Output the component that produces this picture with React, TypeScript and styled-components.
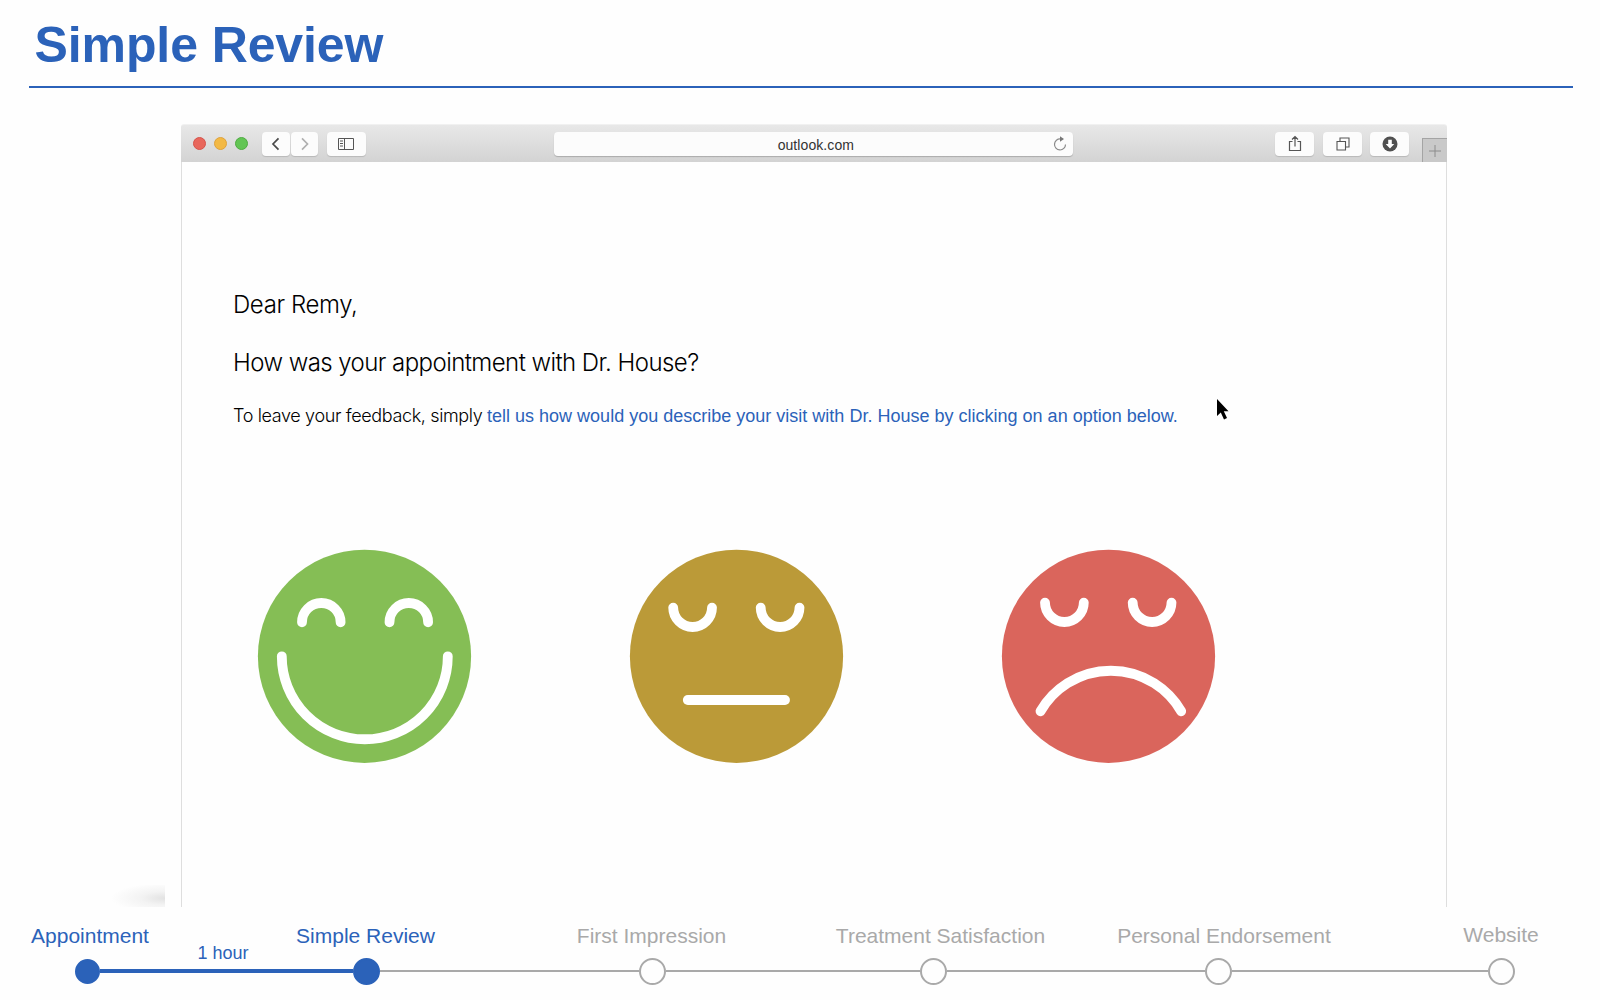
import React from 'react';
import styled, { createGlobalStyle } from 'styled-components';

const BLUE = '#2b62b9';
const GREY = '#a9a9a9';

const GlobalStyle = createGlobalStyle`
  *, *::before, *::after { box-sizing: border-box; }
  body {
    margin: 0;
    background: #fefefe;
    font-family: "Liberation Sans", Arial, sans-serif;
  }
  p, h1 { margin: 0; font-weight: normal; }
`;

const Slide = styled.main`
  width: 1600px;
  height: 1000px;
  display: flex;
  flex-direction: column;
  overflow: hidden;
`;

const Header = styled.header`
  height: 88px;
  margin: 0 27px 0 29px;
  padding: 16px 0 0 5.5px;
  border-bottom: 2px solid ${BLUE};
`;

const Title = styled.h1`
  && { font-weight: bold; }
  font-size: 50px;
  line-height: 58px;
  letter-spacing: -0.1px;
  color: ${BLUE};
`;

const Stage = styled.section`
  display: flex;
  height: 783px;
  margin-top: 36px;
`;

const Gutter = styled.div`
  width: 181px;
  display: flex;
  align-items: flex-end;
  padding-left: 109px;
`;

const Smudge = styled.div`
  width: 56px;
  height: 22px;
  background: radial-gradient(ellipse 54px 15px at 100% 60%, #e2e2e2, #f3f3f3 45%, #fefefe 100%);
`;

const Browser = styled.div`
  width: 1266px;
  display: flex;
  flex-direction: column;
`;

const Toolbar = styled.div`
  height: 38px;
  display: flex;
  align-items: flex-start;
  padding: 7px 0 0 12px;
  border-radius: 3px 3px 0 0;
  border-top: 1px solid #f1f1f1;
  background: linear-gradient(#e8e8e8, #d3d3d3);
`;

const Lights = styled.div`
  display: flex;
  gap: 8px;
  margin: 4.5px 15px 0 0;
`;

const Light = styled.span<{ $fill: string; $edge: string }>`
  width: 13px;
  height: 13px;
  border-radius: 50%;
  background: ${p => p.$fill};
  border: 1px solid ${p => p.$edge};
`;

const ToolButton = styled.button<{ $width: number; $gap?: number }>`
  width: ${p => p.$width}px;
  height: 24px;
  margin: 0 0 0 ${p => p.$gap ?? 0}px;
  padding: 0;
  display: flex;
  align-items: center;
  justify-content: center;
  border: 0;
  border-radius: 4px;
  background: #fcfcfc;
  box-shadow: 0 1px 1px rgba(0, 0, 0, 0.14);
`;

const AddressBar = styled.div`
  width: 519px;
  height: 24px;
  margin-left: 188px;
  display: flex;
  align-items: center;
  justify-content: flex-end;
  padding-right: 6px;
  border-radius: 4px;
  background: #fcfcfc;
  box-shadow: 0 1px 1px rgba(0, 0, 0, 0.2);
`;

const Address = styled.span`
  margin-right: 199px;
  padding-top: 2px;
  font-size: 14px;
  line-height: 22px;
  letter-spacing: 0.08px;
  color: #333;
`;

const NewTab = styled.div`
  width: 25px;
  height: 24px;
  margin: 6px 0 0 auto;
  display: flex;
  align-items: center;
  justify-content: center;
  border: solid #a4a4a4;
  border-width: 1px 0 0 1px;
  background: #c9c9c9;
`;

const Mail = styled.article`
  flex: 1;
  position: relative;
  padding: 128px 0 0 51px;
  border: solid #dedede;
  border-width: 0 1px;
`;

const Line = styled.p<{ $tracking: number }>`
  font-family: Inter, "Liberation Sans", sans-serif;
  font-weight: 300;
  font-size: 24px;
  line-height: 30px;
  margin-bottom: 28px;
  letter-spacing: ${p => p.$tracking}px;
  white-space: nowrap;
  color: #000;
`;

const Hint = styled.p`
  display: flex;
  align-items: baseline;
  margin-top: -1px;
  line-height: 22px;
  font-size: 18px;
  white-space: nowrap;
`;

const HintLead = styled.span`
  width: 254px;
  font-family: Inter, "Liberation Sans", sans-serif;
  font-weight: 300;
  letter-spacing: -0.36px;
`;

const HintLink = styled.a`
  letter-spacing: 0.005px;
  color: ${BLUE};
`;

const Faces = styled.div`
  display: flex;
  gap: 158px;
  margin: 122px 0 0 24px;
`;

const Pointer = styled.svg`
  position: absolute;
  left: 1034px;
  top: 236px;
`;

const Timeline = styled.nav`
  flex: 1;
  display: flex;
  padding: 17px 0 0 74.5px;
`;

const Step = styled.div<{ $size: number }>`
  width: ${p => p.$size}px;
  flex: none;
  display: flex;
  flex-direction: column;
  align-items: center;
`;

const StepLabel = styled.span<{ $active?: boolean; $shift: number; $lift?: number }>`
  height: 33.5px;
  line-height: 24px;
  margin-top: ${p => -(p.$lift ?? 0)}px;
  margin-bottom: ${p => p.$lift ?? 0}px;
  margin-left: ${p => p.$shift * 2}px;
  font-size: 21px;
  white-space: nowrap;
  color: ${p => (p.$active ? BLUE : GREY)};
`;

const Dot = styled.span<{ $size: number; $active?: boolean }>`
  width: ${p => p.$size}px;
  height: ${p => p.$size}px;
  margin-top: ${p => (27 - p.$size) / 2}px;
  border-radius: 50%;
  border: 2px solid ${p => (p.$active ? BLUE : GREY)};
  background: ${p => (p.$active ? BLUE : '#fefefe')};
`;

const Connector = styled.div<{ $width: number; $active?: boolean }>`
  width: ${p => p.$width}px;
  height: ${p => (p.$active ? 49 : 48)}px;
  flex: none;
  display: flex;
  flex-direction: column;
  justify-content: flex-end;
  align-items: center;
  border-bottom: ${p => (p.$active ? `4px solid ${BLUE}` : `2px solid ${GREY}`)};
  font-size: 18px;
  line-height: 20px;
  padding: 0 6px 6px 0;
  color: ${BLUE};
`;

const round = { fill: 'none', stroke: '#fff', strokeWidth: 9.8, strokeLinecap: 'round' as const };

function Face({ color, children }: { color: string; children: React.ReactNode }) {
  return (
    <svg width="215" height="215" viewBox="-107.5 -107.3 215 215" style={{ marginRight: -1 }}>
      <circle r="106.6" fill={color} />
      <g {...round}>{children}</g>
    </svg>
  );
}

const steps = [
  { label: 'Appointment', size: 25, active: true, shift: 3, width: 253, note: '1 hour' },
  { label: 'Simple Review', size: 27, active: true, shift: -0.5, width: 259 },
  { label: 'First Impression', size: 27, shift: -0.5, width: 254 },
  { label: 'Treatment Satisfaction', size: 27, shift: 7.5, width: 258.5 },
  { label: 'Personal Endorsement', size: 27, shift: 5.5, width: 255.5 },
  { label: 'Website', size: 27, shift: 0, lift: 1 },
];

export default function App() {
  return (
    <Slide>
      <GlobalStyle />
      <Header>
        <Title>Simple Review</Title>
      </Header>

      <Stage>
        <Gutter><Smudge /></Gutter>
        <Browser>
          <Toolbar>
            <Lights>
              <Light $fill="#e8675c" $edge="#d6534b" />
              <Light $fill="#f3b945" $edge="#dea23c" />
              <Light $fill="#62c554" $edge="#4fab42" />
            </Lights>
            <ToolButton $width={28} $gap={-1}>
              <svg width="10" height="14" viewBox="0 0 10 14" fill="none" stroke="#4a4a4a" strokeWidth="1.7">
                <path d="M7.500 1.300 2 7l5.500 5.700" />
              </svg>
            </ToolButton>
            <ToolButton $width={27} $gap={1}>
              <svg width="10" height="14" viewBox="0 0 10 14" fill="none" stroke="#b0b0b0" strokeWidth="1.7">
                <path d="M2 1.300 7.500 7 2 12.700" />
              </svg>
            </ToolButton>
            <ToolButton $width={39} $gap={9}>
              <svg width="17" height="12" viewBox="0 0 17 12" fill="none" stroke="#555" strokeWidth="1">
                <path d="M.500.500h15v11H.500zM6.500.500v11M2 3h3M2 5.500h3M2 8h3" />
              </svg>
            </ToolButton>
            <AddressBar>
              <Address>outlook.com</Address>
              <svg width="14" height="16" viewBox="0 0 14 16" fill="none" stroke="#8a8a8a" strokeWidth="1.2">
                <path d="M7.500 3A5.500 5.500 0 1 0 12.500 8.500" />
                <path d="M7 .200 11 3 7 5.800z" fill="#777" stroke="none" />
              </svg>
            </AddressBar>
            <ToolButton $width={39} $gap={202}>
              <svg width="14" height="18" viewBox="0 0 14 18" fill="none" stroke="#555" strokeWidth="1.200">
                <path d="M4.500 6.500H1.500v9h11v-9H9.500M7 11.500V1.500M4 4.500l3-3 3 3" />
              </svg>
            </ToolButton>
            <ToolButton $width={39} $gap={9}>
              <svg width="14" height="14" viewBox="0 0 14 14" fill="none" stroke="#555" strokeWidth="1.100">
                <path d="M1 4.500h8.500v8.500H1zM4 4.500v-3.500h9v9H9.500" />
              </svg>
            </ToolButton>
            <ToolButton $width={39} $gap={8}>
              <svg width="16" height="16" viewBox="0 0 16 16">
                <circle cx="8" cy="8" r="7.500" fill="#505050" />
                <path d="M6.200 3.800h3.600v4.200h2.500L8 12.400 3.700 8h2.500z" fill="#fff" />
              </svg>
            </ToolButton>
            <NewTab>
              <svg width="12" height="12" viewBox="0 0 12 12" stroke="#8c8c8c">
                <path d="M0 6h12M6 0v12" />
              </svg>
            </NewTab>
          </Toolbar>

          <Mail>
            <Line $tracking={-0.39}>Dear Remy,</Line>
            <Line $tracking={-0.56}>How was your appointment with Dr. House?</Line>
            <Hint>
              <HintLead>To leave your feedback, simply</HintLead>
              <HintLink>tell us how would you describe your visit with Dr. House by clicking on an option below.</HintLink>
            </Hint>
            <Faces>
              <Face color="#85be55">
                <path d="M-62.500-34a19.300 19.300 0 0 1 38.600 0M25-34a19.300 19.300 0 0 1 38.600 0" />
                <path d="M-82.700 0a83 83 0 0 0 166 0" />
              </Face>
              <Face color="#bb9a38">
                <path d="M-63.300-48.700a19.400 19.400 0 0 0 38.800 0M24.200-48.700a19.400 19.400 0 0 0 38.800 0" />
                <path d="M-48.700 43.700H48.500" />
              </Face>
              <Face color="#da655c">
                <path d="M-63.500-53.700a19.400 19.400 0 0 0 38.800 0M24.200-53.700a19.400 19.400 0 0 0 38.800 0" />
                <path d="M-68 55A81.300 81.300 0 0 1 72.700 55" />
              </Face>
            </Faces>
            <Pointer width="16" height="24" viewBox="0 0 16 24">
              <path d="M1 1v17l3.800-3.600 3.200 7 3-1.400-3.200-6.800H12.500z" fill="#000" />
            </Pointer>
          </Mail>
        </Browser>
      </Stage>

      <Timeline>
        {steps.map(s => (
          <React.Fragment key={s.label}>
            <Step $size={s.size}>
              <StepLabel $active={s.active} $shift={s.shift} $lift={s.lift}>{s.label}</StepLabel>
              <Dot $size={s.size} $active={s.active} />
            </Step>
            {s.width && <Connector $width={s.width} $active={!!s.note}>{s.note}</Connector>}
          </React.Fragment>
        ))}
      </Timeline>
    </Slide>
  );
}
